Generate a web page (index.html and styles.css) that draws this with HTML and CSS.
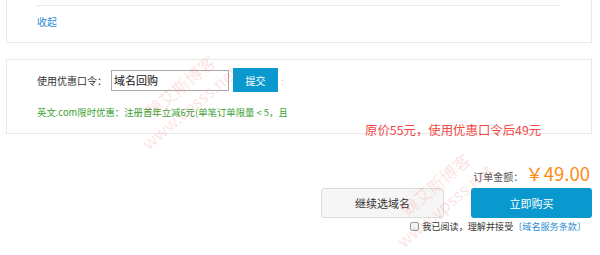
FILE: index.html
```html
<!DOCTYPE html>
<html lang="zh-CN">
<head>
    <meta charset="UTF-8">
    <meta name="viewport" content="width=device-width, initial-scale=1.0">
    <title>域名购买 - 优惠口令</title>
    <link rel="stylesheet" href="styles.css">
</head>
<body>
    <div class="page">
        <!-- 上方已展开的域名列表（只剩收起） -->
        <div class="card card-top">
            <div class="dotted-line"></div>
            <a class="fold-link" href="#">收起</a>
        </div>

        <!-- 优惠口令 -->
        <div class="card card-coupon">
            <form class="coupon-row">
                <label for="couponCode">使用优惠口令：</label>
                <input type="text" id="couponCode" value="域名回购">
                <button type="button" class="btn-submit">提交</button>
                <span class="coupon-tip">:</span>
            </form>
            <div class="promo-line">英文.com限时优惠：注册首年立减6元(单笔订单限量 &lt; 5，且不限购买年限)</div>
        </div>

        <div class="note">原价55元，使用优惠口令后49元</div>

        <!-- 订单金额 -->
        <div class="order">
            <div class="amount">
                <span class="amount-label">订单金额：</span>
                <span class="amount-value">￥49.00</span>
            </div>
            <div class="actions">
                <button type="button" class="btn-continue">继续选域名</button>
                <button type="button" class="btn-buy">立即购买</button>
            </div>
            <div class="agree">
                <input type="checkbox" id="agreeTerms">
                <label for="agreeTerms">我已阅读，理解并接受</label>
                <a href="#" class="terms-link">〔域名服务条款〕</a>
            </div>
        </div>
    </div>

    <!-- 水印 -->
    <div class="watermark wm-1">
        <div class="wm-name">魏艾斯博客</div>
        <div>www.vpsss.net</div>
    </div>
    <div class="watermark wm-2">
        <div class="wm-name">魏艾斯博客</div>
        <div>www.vpsss.net</div>
    </div>
</body>
</html>
```

FILE: styles.css
```css
body {
    margin: 0;
    font-family: "Noto Sans CJK SC", "Microsoft YaHei", sans-serif;
    font-size: 10px;
    color: #333;
    background-color: #fff;
    overflow: hidden;
}

.page {
    position: relative;
    width: 586px;
    margin-left: 6px;
}

.card {
    border: 1px solid #e8e8e8;
    box-sizing: border-box;
}

/* 上方卡片，顶部在视口之外 */
.card-top {
    border-top: none;
    padding: 5px 30px 13px;
}

.dotted-line {
    width: 523px;
    border-top: 1px dotted #d8d8d8;
}

.fold-link {
    display: block;
    margin-top: 9px;
    line-height: 14px;
    color: #2e8bd0;
    text-decoration: none;
}

.card-coupon {
    margin-top: 16px;
    padding: 8px 30px 15px;
}

.coupon-row {
    display: flex;
    align-items: center;
    height: 24px;
    margin: 0;
}

.coupon-row label {
    font-size: 10px;
    color: #333;
    margin-right: 4px;
}

#couponCode {
    width: 118px;
    height: 21px;
    box-sizing: border-box;
    margin: 0;
    padding: 0 2px;
    border: 1px solid #a9a9a9;
    font-family: inherit;
    font-size: 11px;
    color: #111;
    outline: none;
}

.btn-submit {
    width: 45px;
    height: 24px;
    margin-left: 4px;
    border: none;
    background-color: #0a99cf;
    color: #fff;
    font-family: inherit;
    font-size: 10px;
    cursor: pointer;
}

.coupon-tip {
    margin-left: 3px;
    color: #ccc;
}

.promo-line {
    width: 250px;
    margin-top: 14px;
    line-height: 12px;
    font-size: 9.4px;
    white-space: nowrap;
    overflow: hidden;
    color: #3aa133;
}

/* 红色标注 */
.note {
    position: absolute;
    left: 359px;
    top: 123px;
    line-height: 15px;
    font-size: 12.4px;
    color: #f24848;
}

.order {
    display: flex;
    flex-direction: column;
    align-items: flex-end;
    margin-top: 29px;
}

.amount {
    display: flex;
    align-items: baseline;
    height: 20px;
    line-height: 20px;
}

.amount-label {
    color: #555;
    font-size: 10px;
}

.amount-value {
    margin-left: 2px;
    margin-right: 2px;
    color: #ff8a14;
    font-size: 18.5px;
}

.actions {
    display: flex;
    gap: 27px;
    margin-top: 5px;
}

.actions button {
    height: 30px;
    border-radius: 3px;
    font-family: inherit;
    font-size: 11px;
    cursor: pointer;
}

.btn-continue {
    width: 123px;
    border: 1px solid #dcdcdc;
    background-color: #f6f6f6;
    color: #333;
}

.btn-buy {
    width: 121px;
    border: none;
    background-color: #0a99cf;
    color: #fff;
}

.agree {
    display: flex;
    align-items: center;
    margin-top: 3px;
    margin-right: 6px;
    line-height: 11px;
    font-size: 9.1px;
    color: #333;
}

#agreeTerms {
    appearance: none;
    width: 9px;
    height: 9px;
    margin: 0 3px 0 0;
    border: 1px solid #999;
    border-radius: 2px;
    background-color: #f2f2f2;
}

.terms-link {
    color: #2e8bd0;
    text-decoration: none;
}

/* 水印 */
.watermark {
    position: absolute;
    transform: rotate(-40deg);
    transform-origin: 0 0;
    font-size: 17px;
    line-height: 22px;
    color: rgba(240, 70, 70, 0.16);
    white-space: nowrap;
    pointer-events: none;
}

.wm-name {
    padding-left: 23px;
}

.wm-1 {
    left: 123px;
    top: 120px;
}

.wm-2 {
    left: 378px;
    top: 218px;
}
```
